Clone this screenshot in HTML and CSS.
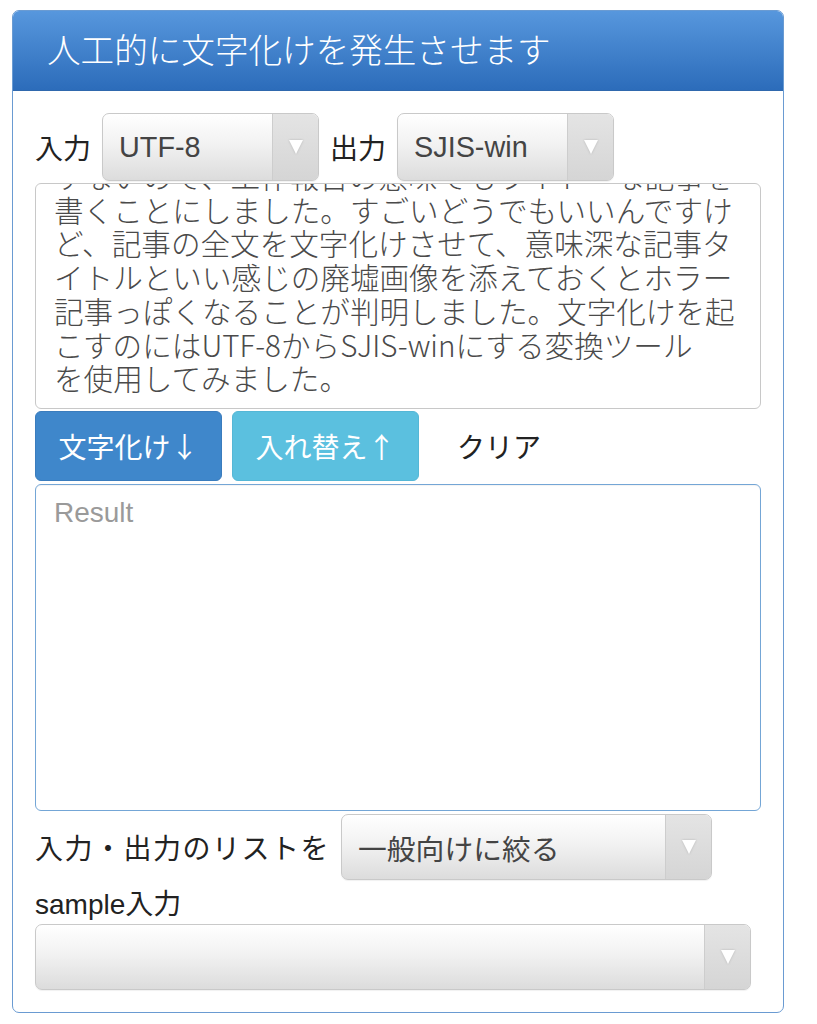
FILE: index.html
```html
<!DOCTYPE html>
<html lang="ja">
<head>
<meta charset="utf-8">
<title>文字化け</title>
<link rel="stylesheet" href="styles.css">
</head>
<body>
<div class="panel">
  <div class="panel-head">人工的に文字化けを発生させます</div>
  <div class="panel-body">
    <div class="row row-top">
      <span class="label">入力</span>
      <div class="select sel-small"><span class="value">UTF-8</span><span class="arrow"><span class="tri"></span></span></div>
      <span class="label">出力</span>
      <div class="select sel-small"><span class="value">SJIS-win</span><span class="arrow"><span class="tri"></span></span></div>
    </div>
    <div class="textarea source">
      <p class="src-text">すないので、工作報告の意味でもライトーな記事を<br>書くことにしました。すごいどうでもいいんですけ<br>ど、記事の全文を文字化けさせて、意味深な記事タ<br>イトルといい感じの廃墟画像を添えておくとホラー<br>記事っぽくなることが判明しました。文字化けを起<br>こすのにはUTF-8からSJIS-winにする変換ツール<br>を使用してみました。</p>
    </div>
    <div class="buttons">
      <button class="btn btn-primary">文字化け↓</button>
      <button class="btn btn-info">入れ替え↑</button>
      <button class="btn btn-link">クリア</button>
    </div>
    <div class="textarea result"><span class="placeholder">Result</span></div>
    <div class="row row-filter">
      <span class="label label-wide">入力・出力のリストを</span>
      <div class="select sel-mid"><span class="value">一般向けに絞る</span><span class="arrow"><span class="tri"></span></span></div>
    </div>
    <div class="sample-label">sample入力</div>
    <div class="select sel-full"><span class="value"></span><span class="arrow"><span class="tri"></span></span></div>
  </div>
</div>
</body>
</html>
```
FILE: styles.css
```css
* { box-sizing: border-box; }
html, body { margin: 0; padding: 0; background: #fff; }
body {
  font-family: "Liberation Sans", "Noto Sans CJK JP", sans-serif;
  color: #222;
}
.panel {
  margin: 10px 0 0 12px;
  width: 772px;
  height: 1003px;
  border: 1px solid #6a9bd2;
  border-radius: 7px;
  overflow: hidden;
  background: #fff;
}
.panel-head {
  height: 80px;
  padding-left: 34px;
  background: linear-gradient(#5797dd, #2c6cba);
  color: #fff;
  font-family: "Noto Sans CJK JP", sans-serif;
  font-weight: 300;
  font-size: 33.6px;
  line-height: 76px;
  border-bottom: 1px solid #2f68ad;
}
.panel-body {
  padding: 22px 22px 22px 22px;
}
.row {
  display: flex;
  align-items: center;
  gap: 11px;
}
.row-top { height: 68px; }
.label {
  font-family: "Liberation Sans", "Noto Sans CJK JP", sans-serif;
  font-size: 28px;
  color: #222;
  white-space: nowrap;
}
.label-wide { letter-spacing: 1.5px; }
.select {
  display: flex;
  align-items: stretch;
  border: 1px solid #c9c9c9;
  border-radius: 7px;
  background: linear-gradient(#ffffff 0%, #f2f2f2 45%, #dcdcdc 100%);
  overflow: hidden;
  box-shadow: 0 1px 1px rgba(0,0,0,0.06);
}
.sel-small { width: 217px; height: 68px; }
.sel-mid { width: 371px; height: 66px; }
.sel-full { width: 716px; height: 66px; }
.value {
  flex: 1;
  display: flex;
  align-items: center;
  padding-left: 16px;
  font-size: 28.8px;
  color: #444;
  white-space: nowrap;
}
.arrow {
  width: 46px;
  display: flex;
  align-items: center;
  justify-content: center;
  border-left: 1px solid #cdcdcd;
  background: linear-gradient(#e4e4e4, #d5d5d5);
}
.tri {
  width: 0;
  height: 0;
  border-left: 7px solid transparent;
  border-right: 7px solid transparent;
  border-top: 14px solid #fff;
  filter: drop-shadow(0 0 1px rgba(0,0,0,0.18));
}
.textarea {
  border: 1px solid #c8c8c8;
  border-radius: 6px;
  background: #fff;
  overflow: hidden;
}
.source {
  margin-top: 2px;
  height: 226px;
  padding: 0 18px;
}
.src-text {
  margin: -25px 0 0 0;
  font-family: "Noto Sans CJK JP", sans-serif;
  font-weight: 300;
  font-size: 29.6px;
  line-height: 33.7px;
  color: #4a4a4a;
  white-space: nowrap;
}
.buttons {
  margin-top: 2px;
  height: 70px;
  display: flex;
  gap: 10px;
}
.btn {
  height: 70px;
  border: 0;
  border-radius: 6px;
  font-family: "Noto Sans CJK JP", sans-serif;
  font-size: 28px;
  padding: 0;
  color: #fff;
}
.btn-primary {
  width: 187px;
  background: #3f87cb;
  border: 1px solid #3a7cbd;
}
.btn-info {
  width: 187px;
  background: #5bc0df;
  border: 1px solid #55b7d6;
}
.btn-link {
  background: transparent;
  color: #222;
  padding: 0 28px;
}
.result {
  margin-top: 3px;
  height: 327px;
  border-color: #74a6d6;
  padding: 12px 18px;
  box-shadow: inset 0 1px 1px rgba(0,0,0,0.05);
}
.placeholder {
  font-size: 28px;
  color: #9a9a9a;
}
.row-filter {
  margin-top: 3px;
  height: 66px;
}
.sample-label {
  height: 44px;
  display: flex;
  align-items: center;
  font-size: 28px;
  color: #222;
}
```
